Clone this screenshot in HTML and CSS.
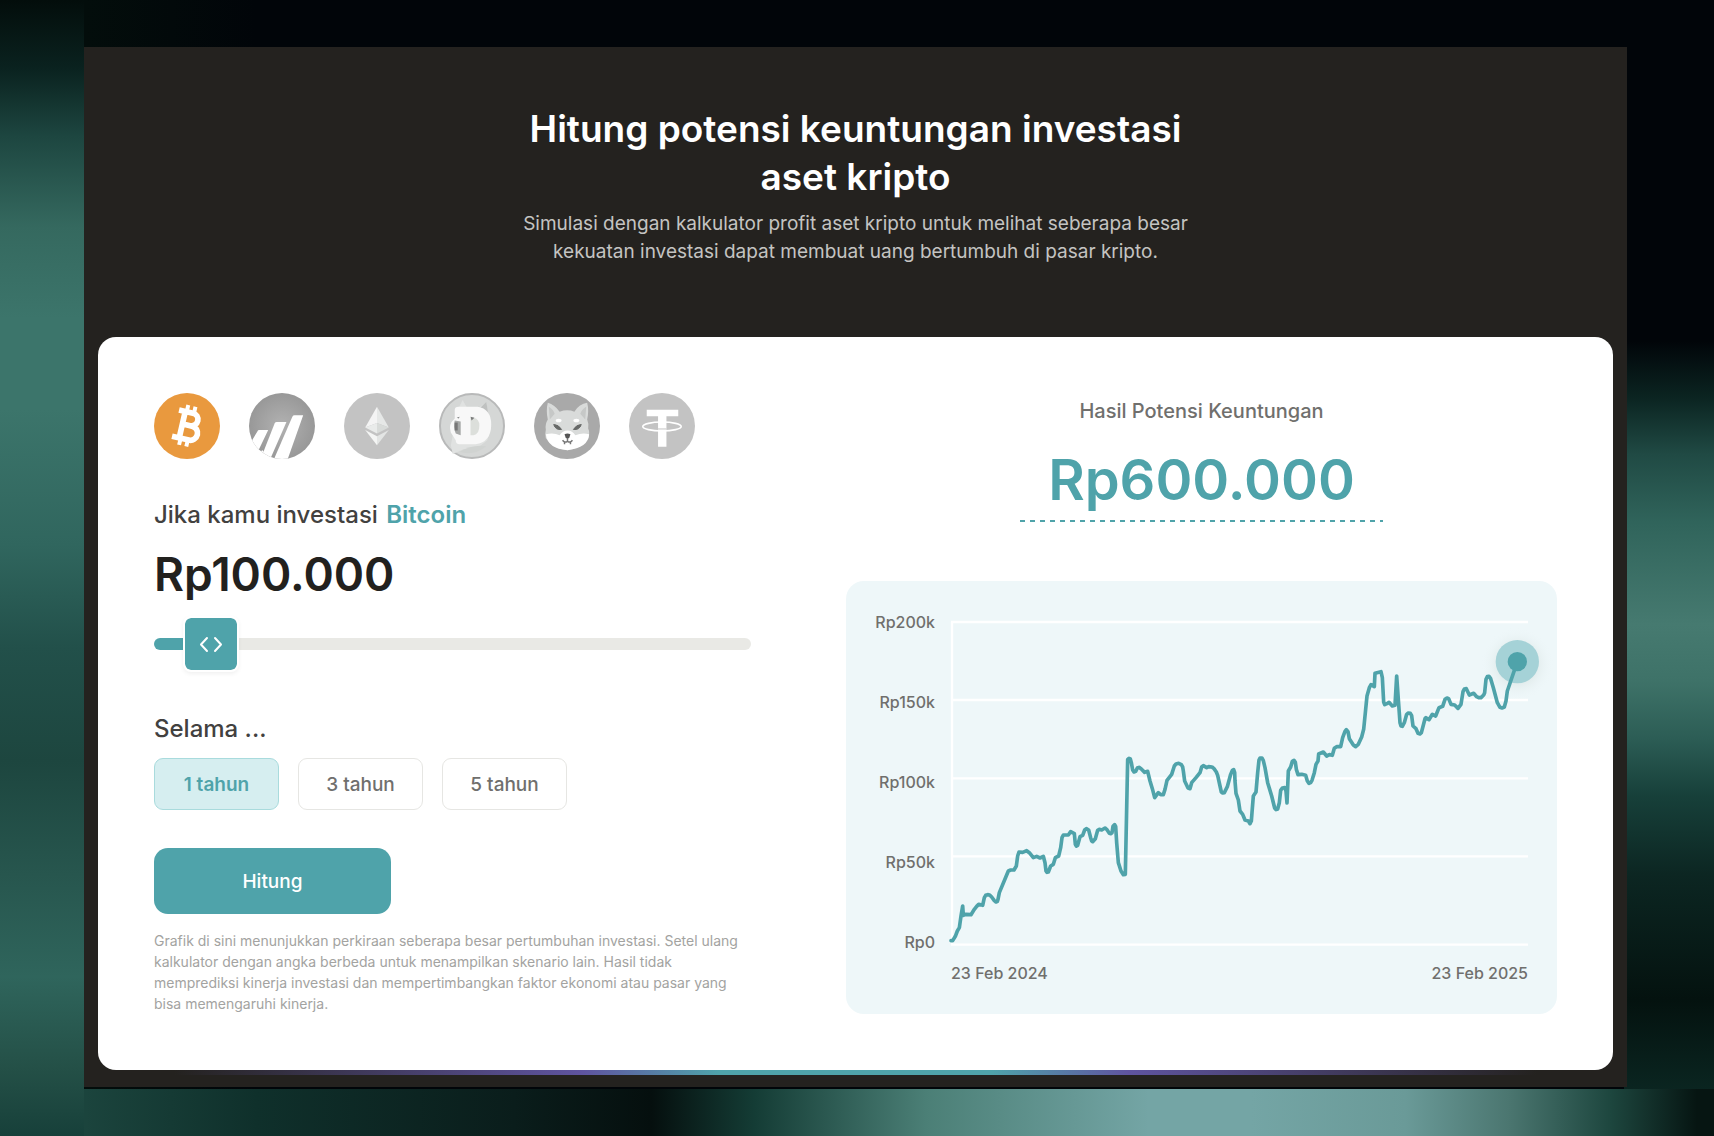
FILE: index.html
```html
<!DOCTYPE html>
<html lang="id">
<head>
<meta charset="utf-8">
<meta name="viewport" content="width=device-width, initial-scale=1">
<title>Kalkulator profit aset kripto</title>
<link rel="stylesheet" href="styles.css">
</head>
<body>
<main class="panel">
  <header class="intro">
    <h1 class="intro-title">Hitung potensi keuntungan investasi aset kripto</h1>
    <p class="intro-text">Simulasi dengan kalkulator profit aset kripto untuk melihat seberapa besar kekuatan investasi dapat membuat uang bertumbuh di pasar kripto.</p>
  </header>

  <section class="card">
    <form class="calculator">
      <div class="coins">
        <button class="coin" type="button" aria-label="Bitcoin" aria-pressed="true">
          <svg viewBox="0 0 67 67" aria-hidden="true">
            <circle cx="33.500" cy="33.500" r="33.500" fill="#e9993e"/>
            <g transform="rotate(13 33.500 33.500)" fill="none" stroke="#fff">
              <path d="M22 19.500H36.500a6.300 6.300 0 0 1 0 13H28M36.500 32.500h2a7 7 0 0 1 0 14.500H21M28.500 19.500V47" stroke-width="5.800"/>
              <path d="M30 12.500v7M37.500 12.500v7M30 47v7M37.500 47v7" stroke-width="4"/>
            </g>
          </svg>
        </button>
        <button class="coin" type="button" aria-label="BMRI" aria-pressed="false">
          <svg viewBox="0 0 67 67" aria-hidden="true">
            <defs>
              <radialGradient id="bars-bg"><stop offset="0" stop-color="#b2b2b2"/><stop offset="1" stop-color="#989898"/></radialGradient>
              <clipPath id="bars-clip"><circle cx="33.500" cy="33.500" r="33.500"/></clipPath>
            </defs>
            <circle cx="33.500" cy="33.500" r="33.500" fill="url(#bars-bg)"/>
            <g clip-path="url(#bars-clip)" fill="#fff">
              <path d="M8.500 39q.5-1.500 2-1.500h9L4 70-4 60z"/>
              <path d="M26 31q.7-1.500 2.200-1.500h9.800L22 66l-9-1 2-6z"/>
              <path d="M44 24q.7-1.500 2.200-1.500H55L39 68H25z"/>
              <path d="M10 60l4-2 1 2-2 5z"/>
            </g>
          </svg>
        </button>
        <button class="coin" type="button" aria-label="Ethereum" aria-pressed="false">
          <svg viewBox="0 0 67 67" aria-hidden="true">
            <circle cx="33.500" cy="33.500" r="33.500" fill="#c3c3c3"/>
            <path d="M33.500 14v16.500L21.500 35z" fill="#f4f4f4"/>
            <path d="M33.500 14l12 21-12-4.500z" fill="#e6e8e7"/>
            <path d="M33.500 30.500V41l-12-6z" fill="#e9ebea"/>
            <path d="M33.500 30.500l12 4.500-12 6z" fill="#d8dbd9"/>
            <path d="M21.500 37.500l12 6.500v9z" fill="#f4f5f4"/>
            <path d="M45.500 37.500l-12 6.500v9z" fill="#e3e5e4"/>
          </svg>
        </button>
        <button class="coin" type="button" aria-label="Dogecoin" aria-pressed="false">
          <svg viewBox="0 0 67 67" aria-hidden="true">
            <circle cx="33.500" cy="33.500" r="32.500" fill="#d5d7d6" stroke="#b8b9b9" stroke-width="2"/>
            <path d="M19 17l5-10 5 9 9 1 10-8 2 13 3 12-4 14-10 8-14 1-11 5-2-9z" fill="#e0e2e1"/>
            <path d="M41 16l7-7 2 12z" fill="#bfc1c0"/>
            <path d="M16 17q0-3 4-3h19q14 2 14 18 0 18-16 20H21q-4 0-4-4l-5-8q-3-8 4-14z" fill="#f8f8f8"/>
            <path d="M32 25h3q6 1 6 8 0 9-6 10h-3z" fill="#dcdfdb"/>
            <path d="M16 28l6 1v14l-5-2q-3-6-1-13z" fill="#a6a8a7"/>
            <path d="M16 30h3v8h-3z" fill="#777"/>
            <path d="M32 24l4 1-3 3zM18 25l3-1-1 2z" fill="#7b7d7c"/>
            <path d="M21 60q12-8 27-6-12 10-27 6z" fill="#d0d3d1"/>
          </svg>
        </button>
        <button class="coin" type="button" aria-label="Shiba Inu" aria-pressed="false">
          <svg viewBox="0 0 67 67" aria-hidden="true">
            <circle cx="33.500" cy="33.500" r="33.500" fill="#a9a9a9"/>
            <path d="M14 10q7 2 12 9 8-3 15 0 5-8 13-9 2 8 0 17 2 5 1 9 2 4 0 10-8 11-21 12-14-1-22-12-1-5 0-9-1-5 2-10-2-9 0-17z" fill="#d9dbda"/>
            <path d="M15 14q4 2 6 7l-5 6zM53 14q-4 2-6 7l5 6z" fill="#c6c8c7"/>
            <path d="M12 42q8-2 14 1 3-5 8-5t8 5q7-3 14-1-1 14-22 16-20-1-22-16z" fill="#fff"/>
            <ellipse cx="25" cy="28" rx="3" ry="1.800" fill="#fff"/><ellipse cx="43" cy="28" rx="3" ry="1.800" fill="#fff"/>
            <path d="M20 32q5 0 8 5-6 1-8-5zM48 32q-5 0-8 5 6 1 8-5z" fill="#676968" stroke="#676968"/>
            <path d="M31 42q3-2 6 0l-1 3-2 2-2-2z" fill="#555"/>
            <path d="M34 46v3M29 48q2 3 5 1 3 2 5-1M31 50v2M37 50v2" fill="none" stroke="#777" stroke-width="1.500"/>
          </svg>
        </button>
        <button class="coin" type="button" aria-label="Tether" aria-pressed="false">
          <svg viewBox="0 0 67 67" aria-hidden="true">
            <circle cx="33.500" cy="33.500" r="33.500" fill="#c3c3c3"/>
            <path d="M18 17h32v6.500H38v31h-8.500v-31H18z" fill="#fff"/>
            <ellipse cx="33.500" cy="34" rx="19.500" ry="4.500" fill="none" stroke="#fff" stroke-width="1.600"/>
            <path d="M29.500 36.500h8.500" stroke="#c3c3c3" stroke-width="1"/>
          </svg>
        </button>
      </div>

      <label class="question" for="amount">Jika kamu investasi <span class="accent">Bitcoin</span></label>
      <output class="amount" for="amount">Rp100.000</output>
      <input class="slider" id="amount" type="range" min="0" max="1850000" step="50000" value="100000">

      <h2 class="question question-period">Selama ...</h2>
      <div class="periods">
        <button class="period" type="button" aria-pressed="true">1 tahun</button>
        <button class="period" type="button" aria-pressed="false">3 tahun</button>
        <button class="period" type="button" aria-pressed="false">5 tahun</button>
      </div>

      <button class="submit" type="button">Hitung</button>
      <p class="note">Grafik di sini menunjukkan perkiraan seberapa besar pertumbuhan investasi. Setel ulang kalkulator dengan angka berbeda untuk menampilkan skenario lain. Hasil tidak memprediksi kinerja investasi dan mempertimbangkan faktor ekonomi atau pasar yang bisa memengaruhi kinerja.</p>
    </form>

    <div class="result">
      <h2 class="result-label">Hasil Potensi Keuntungan</h2>
      <p class="result-value">Rp600.000</p>
      <div class="chart">
        <div class="y-axis">
          <span>Rp200k</span><span>Rp150k</span><span>Rp100k</span><span>Rp50k</span><span>Rp0</span>
        </div>
        <svg class="plot" viewBox="33 68 1731 970" role="img" aria-label="Grafik pertumbuhan investasi">
          <defs>
            <radialGradient id="halo"><stop offset="0.500" stop-color="#e0eaea" stop-opacity="0.900"/><stop offset="1" stop-color="#eef7f9" stop-opacity="0"/></radialGradient>
          </defs>
          <path d="M36 68V1037M33 68H1764M33 302H1764M33 537H1764M33 771H1764M33 1036H1764" fill="none" stroke="#fff" stroke-width="7"/>
          <circle cx="1732" cy="194" r="110" fill="url(#halo)"/>
          <circle cx="1732" cy="187" r="65" fill="#a5d2d7"/>
          <polyline fill="none" stroke="#4fa3aa" stroke-width="11" stroke-linecap="round" stroke-linejoin="round" points="33,1024 38,1024 46,1011 52,995 58,985 63,950 68,920 70,948 78,945 93,946 103,930 110,921 116,915 128,918 133,895 137,888 143,886 149,887 155,893 163,904 168,908 172,906 174,900 178,880 205,815 212,812 222,812 229,800 233,770 237,758 248,759 260,754 268,760 280,775 290,771 300,776 310,771 315,790 318,815 321,819 325,818 332,800 340,795 346,775 356,770 362,745 366,715 370,707 385,707 392,697 403,703 406,735 409,740 413,738 420,712 428,708 434,692 439,688 446,692 452,715 455,725 458,727 466,718 473,693 478,690 485,692 495,686 500,690 508,702 512,703 516,700 519,681 524,676 527,681 530,730 535,790 543,815 550,826 556,825 563,481 567,477 571,479 574,490 578,512 582,518 587,516 592,506 597,504 604,509 614,519 623,516 630,545 637,568 644,595 655,580 662,586 670,586 675,570 681,543 695,525 703,500 708,494 716,492 724,496 728,503 730,515 734,545 744,566 750,568 755,550 768,535 780,520 785,503 790,499 800,505 806,502 816,503 822,508 829,518 833,528 840,560 844,578 848,581 853,580 862,562 872,525 877,513 881,511 884,520 885,545 888,582 895,602 900,635 908,645 915,662 925,665 930,673 934,665 936,640 940,590 948,578 953,520 957,482 960,476 966,476 970,484 975,505 983,550 995,590 1004,626 1008,631 1013,629 1018,610 1022,573 1027,566 1034,565 1038,575 1041,611 1045,515 1052,503 1057,486 1062,483 1066,489 1069,510 1074,526 1085,525 1097,528 1102,545 1107,552 1112,550 1116,543 1123,520 1128,495 1134,485 1136,464 1150,458 1160,470 1168,466 1177,468 1183,447 1190,442 1202,442 1208,415 1215,396 1219,391 1224,397 1228,418 1240,437 1247,442 1255,435 1265,413 1271,390 1277,330 1281,290 1288,265 1293,256 1303,262 1305,222 1323,217 1327,235 1331,308 1334,316 1341,313 1347,309 1357,320 1365,318 1370,230 1375,300 1380,370 1383,380 1387,381 1393,370 1400,345 1405,341 1411,342 1415,349 1419,380 1428,388 1434,402 1440,404 1444,400 1448,385 1455,358 1458,355 1467,361 1477,345 1487,350 1497,325 1508,321 1515,300 1521,296 1526,298 1533,315 1544,317 1554,327 1563,315 1569,277 1573,269 1579,268 1588,287 1601,282 1610,292 1616,295 1623,295 1631,287 1634,280 1638,240 1642,232 1647,231 1652,238 1660,265 1672,310 1680,324 1686,326 1693,323 1698,305 1702,275 1732,187"/>
          <circle cx="1732" cy="187" r="29" fill="#4fa3aa"/>
        </svg>
        <div class="x-axis"><span>23 Feb 2024</span><span>23 Feb 2025</span></div>
      </div>
    </div>
  </section>
  <div class="glow"></div>
</main>
</body>
</html>
```
FILE: styles.css
```css
:root {
  --teal: #4fa3aa;
  --panel: #24221f;
  --ink: #22211e;
  --muted: #706f6d;
}

* {
  box-sizing: border-box;
}

body {
  margin: 0;
  min-height: 100vh;
  padding: 47px 87px 47px 84px;
  font-family: Inter, "Liberation Sans", sans-serif;
  color: var(--ink);
  background:
    linear-gradient(180deg, #030d0b 0%, #0a221f 6%, #1d4640 12%, #35695f 20%, #3c756b 28%, #3c756b 36%, #30665e 48%, #22504a 57%, #1d463f 67%, #27564e 77%, #2f655c 86%, #245047 94%, #17403a 100%) left top / 84px 100% no-repeat,
    linear-gradient(90deg, #1b443d 5%, #0f302b 15%, #0a1d1b 30%, #050f0e 38%, #143c35 44%, #4b7f76 54%, #74a5a5 67%, #74a5a5 73%, #6a9a98 82%, #4b7670 88%, #1d463e 94%, #061512 99%) left bottom / 100% 47px no-repeat,
    linear-gradient(180deg, #010509 30%, #0b2421 35%, #204a44 40%, #30645b 46%, #467a70 55%, #3e7268 60%, #2c5d55 65%, #17403a 70%, #0c2622 77%, #04120f 88%, #0c2a25 98%) right top / 90px 100% no-repeat,
    linear-gradient(90deg, #030d0b 5%, #010509 15%) #010509;
}

h1,
h2,
p {
  margin: 0;
}

button {
  font: inherit;
  padding: 0;
  cursor: pointer;
}

.panel {
  padding: 58px 14px 12px;
  background: var(--panel);
}

.intro {
  max-width: 720px;
  margin: 0 auto 71px;
  text-align: center;
}

.intro-title {
  font-size: 37px;
  line-height: 48px;
  font-weight: 600;
  color: #fff;
}

.intro-text {
  max-width: 680px;
  margin: 9px auto 0;
  font-size: 19px;
  line-height: 28px;
  color: #c4c4c2;
}

.card {
  display: grid;
  grid-template-columns: 597fr 711fr;
  gap: 95px;
  padding: 56px;
  border-radius: 18px;
  background: #fff;
}

.calculator {
  display: flex;
  flex-direction: column;
  align-items: flex-start;
}

.coins {
  display: flex;
  gap: 29px;
}

.coin {
  width: 66px;
  height: 66px;
  border: 0;
  border-radius: 50%;
  background: none;
}

.coin svg {
  display: block;
}

.question {
  margin-top: 40px;
  font-size: 24px;
  line-height: 32px;
  font-weight: 500;
  color: #42413f;
}

.question-period {
  margin-top: 42px;
}

.accent {
  margin-left: 2px;
  font-weight: 600;
  color: var(--teal);
}

.amount {
  margin-top: 15px;
  font-size: 46px;
  line-height: 56px;
  font-weight: 600;
}

.slider {
  appearance: none;
  width: 100%;
  height: 54px;
  margin: 15px 0 0;
  background: none;
}

.slider::-webkit-slider-runnable-track {
  height: 12px;
  border-radius: 6px;
  background: linear-gradient(90deg, var(--teal) 10%, #e9e9e5 10%);
}

.slider::-webkit-slider-thumb {
  appearance: none;
  width: 56px;
  height: 56px;
  margin-top: -22px;
  border: 2px solid #fff;
  border-radius: 8px;
  background: url("data:image/svg+xml,%3Csvg xmlns='http://www.w3.org/2000/svg' viewBox='0 0 52 52' fill='none' stroke='white' stroke-width='2' stroke-linecap='round' stroke-linejoin='round'%3E%3Cpath d='M22 20l-6 6.500 6 6.500M30 20l6 6.500-6 6.500'/%3E%3C/svg%3E") center / 52px 52px no-repeat var(--teal);
  background-clip: padding-box;
  box-shadow: 0 2px 4px rgb(0 0 0 / 6%);
}

.periods {
  display: flex;
  gap: 19px;
  margin-top: 13px;
}

.period {
  width: 125px;
  height: 52px;
  border: 1px solid #e6e6e3;
  border-radius: 9px;
  background: #fff;
  font-size: 19px;
  font-weight: 500;
  color: var(--muted);
}

.period[aria-pressed="true"] {
  border-color: #a9dbdd;
  background: #d6eef0;
  font-weight: 600;
  color: var(--teal);
}

.submit {
  width: 237px;
  height: 66px;
  margin-top: 38px;
  border: 0;
  border-radius: 14px;
  background: var(--teal);
  font-size: 19px;
  font-weight: 500;
  color: #fff;
}

.note {
  margin-top: 16px;
  font-size: 14px;
  line-height: 21px;
  color: #a3a3a1;
}

.result {
  display: flex;
  flex-direction: column;
  align-items: center;
}

.result-label {
  margin-top: 4px;
  font-size: 20px;
  line-height: 28px;
  font-weight: 500;
  color: var(--muted);
}

.result-value {
  width: 363px;
  margin-top: 23px;
  padding-bottom: 10px;
  font-size: 56px;
  line-height: 64px;
  font-weight: 600;
  text-align: center;
  color: var(--teal);
  background: repeating-linear-gradient(90deg, var(--teal) 0 5px, transparent 5px 10px) left bottom / 100% 2px no-repeat;
}

.chart {
  display: grid;
  grid-template-columns: 61px 1fr;
  column-gap: 16px;
  width: 100%;
  margin-top: 59px;
  padding: 29px 29px 29px 28px;
  border-radius: 18px;
  background: #eef7f9;
  font-size: 16px;
  line-height: 24px;
  font-weight: 500;
  color: var(--muted);
}

.y-axis {
  display: flex;
  flex-direction: column;
  justify-content: space-between;
  padding-bottom: 3px;
  text-align: right;
}

.plot {
  display: block;
  width: 100%;
  margin: 12px 0;
  overflow: visible;
}

.x-axis {
  grid-column: 2;
  display: flex;
  justify-content: space-between;
  margin-top: 4px;
}

.glow {
  height: 5px;
  margin: 0 5%;
  background: linear-gradient(90deg, transparent, #5f54a0 30%, var(--teal) 40%, var(--teal) 60%, #5f54a0 70%, transparent);
}
```
